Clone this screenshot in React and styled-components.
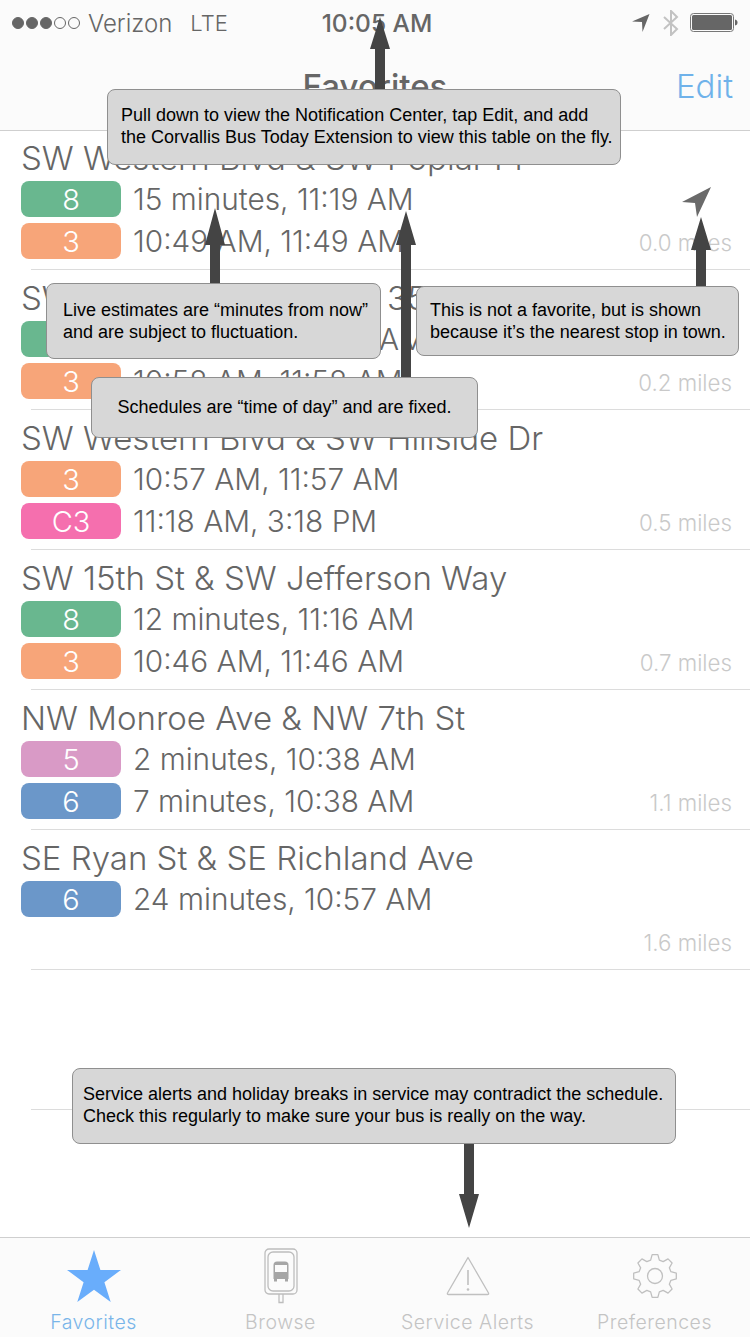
import React from 'react'
import styled, { createGlobalStyle } from 'styled-components'

const stops = [
  {
    name: 'SW Western Blvd & SW Poplar Pl',
    miles: '0.0 miles',
    nearest: true,
    routes: [
      { id: '8', color: '#69b78f', times: '15 minutes, 11:19 AM' },
      { id: '3', color: '#f7a579', times: '10:49 AM, 11:49 AM' }
    ]
  },
  {
    name: 'SW Western Blvd & SW 35th St',
    miles: '0.2 miles',
    routes: [
      { id: '8', color: '#69b78f', times: '23 minutes, 11:27 AM' },
      { id: '3', color: '#f7a579', times: '10:58 AM, 11:58 AM' }
    ]
  },
  {
    name: 'SW Western Blvd & SW Hillside Dr',
    miles: '0.5 miles',
    routes: [
      { id: '3', color: '#f7a579', times: '10:57 AM, 11:57 AM' },
      { id: 'C3', color: '#f56fae', times: '11:18 AM, 3:18 PM' }
    ]
  },
  {
    name: 'SW 15th St & SW Jefferson Way',
    miles: '0.7 miles',
    routes: [
      { id: '8', color: '#69b78f', times: '12 minutes, 11:16 AM' },
      { id: '3', color: '#f7a579', times: '10:46 AM, 11:46 AM' }
    ]
  },
  {
    name: 'NW Monroe Ave & NW 7th St',
    miles: '1.1 miles',
    routes: [
      { id: '5', color: '#d99ac6', times: '2 minutes, 10:38 AM' },
      { id: '6', color: '#6b97c9', times: '7 minutes, 10:38 AM' }
    ]
  },
  {
    name: 'SE Ryan St & SE Richland Ave',
    miles: '1.6 miles',
    routes: [{ id: '6', color: '#6b97c9', times: '24 minutes, 10:57 AM' }]
  }
]

const gearPath = () => {
  const teeth = 8
  const pts = []
  for (let i = 0; i < teeth; i++) {
    const a = (i / teeth) * Math.PI * 2 - Math.PI / 2
    const step = (Math.PI * 2) / teeth
    const add = (r, o) => pts.push(`${(22 + r * Math.cos(a + o * step)).toFixed(2)} ${(22 + r * Math.sin(a + o * step)).toFixed(2)}`)
    add(16.5, -0.34)
    add(21.5, -0.17)
    add(21.5, 0.17)
    add(16.5, 0.34)
  }
  return 'M' + pts.join('L') + 'Z'
}

const GlobalStyle = createGlobalStyle`
  html, body {
    margin: 0;
    padding: 0;
    background: #fff;
  }
  body {
    font-family: Inter, "Liberation Sans", sans-serif;
  }
`

const Screen = styled.div`
  position: relative;
  width: 750px;
  height: 1337px;
  display: flex;
  flex-direction: column;
  overflow: hidden;
  background: #fff;
`

const Header = styled.header`
  height: 131px;
  box-sizing: border-box;
  flex-shrink: 0;
  background: #fbfbfb;
  border-bottom: 1px solid #cfcfcf;
`

const StatusBar = styled.div`
  height: 46px;
  display: flex;
  align-items: center;
  justify-content: space-between;
  padding: 0 12px;
  color: #666;
  font-size: 24px;
  font-weight: 300;
`

const Carrier = styled.div`
  width: 234px;
  display: flex;
  align-items: center;
  gap: 8px;
`

const Dots = styled.span`
  display: flex;
  gap: 2px;
`

const Dot = styled.i`
  width: 12px;
  height: 12px;
  box-sizing: border-box;
  border-radius: 50%;
  border: 1px solid #666;
  background: ${p => (p.$on ? '#666' : 'transparent')};
`

const Network = styled.span`
  margin-left: 10px;
  font-size: 22px;
`

const Clock = styled.div`
  font-weight: 500;
  font-size: 24.5px;
`

const StatusIcons = styled.div`
  width: 230px;
  display: flex;
  align-items: center;
  justify-content: flex-end;
  gap: 11px;
`

const NavBar = styled.div`
  height: 84px;
  display: flex;
  align-items: center;
  justify-content: center;
  position: relative;
  padding-bottom: 4px;
  box-sizing: border-box;
`

const NavTitle = styled.h1`
  margin: 0;
  font-size: 33px;
  font-weight: 500;
  color: #666;
`

const EditButton = styled.button`
  position: absolute;
  right: 17px;
  top: 20px;
  padding: 0;
  border: 0;
  background: none;
  font: inherit;
  font-size: 33px;
  font-weight: 300;
  color: #6fb2ea;
`

const List = styled.main`
  flex: 1;
  min-height: 0;
`

const Row = styled.section`
  position: relative;
  display: flex;
  height: 140px;
  box-sizing: border-box;
  padding: 9px 18px 0 21px;
  &:first-child {
    height: 139px;
    padding-top: 8px;
  }
  &::after {
    content: '';
    position: absolute;
    left: 31px;
    right: 0;
    bottom: 0;
    height: 1px;
    background: #dcdcdc;
  }
`

const StopInfo = styled.div`
  flex: 1;
`

const StopName = styled.h2`
  margin: 0;
  height: 42px;
  line-height: 38px;
  font-size: 33px;
  font-weight: 300;
  color: #666;
  white-space: nowrap;
`

const RouteLine = styled.div`
  display: flex;
  align-items: center;
  height: 36px;
  margin-bottom: 6px;
`

const Badge = styled.span`
  width: 100px;
  height: 36px;
  flex-shrink: 0;
  display: flex;
  align-items: center;
  justify-content: center;
  border-radius: 8px;
  color: #fff;
  font-size: 29px;
  font-weight: 300;
  background: ${p => p.$color};
`

const Times = styled.span`
  margin-left: 12px;
  font-size: 29.8px;
  font-weight: 300;
  color: #666;
  white-space: nowrap;
`

const Side = styled.div`
  display: flex;
  flex-direction: column;
  align-items: flex-end;
  justify-content: flex-end;
  padding-bottom: 14px;
`

const Miles = styled.span`
  font-size: 22.3px;
  font-weight: 300;
  color: #c9c9c9;
  white-space: nowrap;
`

const NearestIcon = styled.svg`
  position: absolute;
  left: 682px;
  top: 56px;
`

const TabBar = styled.nav`
  height: 100px;
  flex-shrink: 0;
  box-sizing: border-box;
  display: grid;
  grid-template-columns: repeat(4, 1fr);
  padding-right: 2px;
  background: #fbfbfb;
  border-top: 1px solid #cfcfcf;
`

const Tab = styled.div`
  display: flex;
  flex-direction: column;
  align-items: center;
  padding-top: 10px;
  color: ${p => (p.$active ? '#79b5e9' : '#c4c4c4')};
  font-size: 19.5px;
  line-height: 24px;
  font-weight: 300;
  letter-spacing: 0.5px;
`

const TabIcon = styled.div`
  height: 56px;
  margin-bottom: 6px;
  display: flex;
  align-items: center;
  justify-content: center;
`

const Tooltip = styled.div`
  position: absolute;
  z-index: 2;
  left: ${p => p.$left}px;
  top: ${p => p.$top}px;
  width: ${p => p.$width}px;
  height: ${p => p.$height}px;
  box-sizing: border-box;
  display: flex;
  align-items: center;
  justify-content: ${p => (p.$center ? 'center' : 'flex-start')};
  padding-left: ${p => (p.$center ? 0 : p.$inset)}px;
  padding-bottom: ${p => p.$lift ?? 2}px;
  background: #d7d7d7;
  border: 1px solid #8f8f8f;
  border-radius: 8px;
  color: #000;
  font-family: "Liberation Sans", Arial, sans-serif;
  font-size: 18px;
  line-height: 22px;
  white-space: pre;
`

const ArrowSvg = styled.svg`
  position: absolute;
  z-index: 1;
  left: ${p => p.$x - 10}px;
  top: ${p => p.$top}px;
`

const UpArrow = ({ x, tip, end, base }) => {
  const h = end - tip
  const b = base - tip
  return (
    <ArrowSvg $x={x} $top={tip} width='20' height={h}>
      <polygon points={`10,0 20,${b} 15,${b} 15,${h} 5,${h} 5,${b} 0,${b}`} fill='#444' />
    </ArrowSvg>
  )
}

const DownArrow = ({ x, start, base, tip }) => {
  const h = tip - start
  const b = base - start
  return (
    <ArrowSvg $x={x} $top={start} width='20' height={h}>
      <polygon points={`5,0 15,0 15,${b} 20,${b} 10,${h} 0,${b} 5,${b}`} fill='#444' />
    </ArrowSvg>
  )
}

const LocationGlyph = styled.svg`
  margin-right: 2px;
`

const StatusLocation = () => (
  <LocationGlyph width='18' height='18' viewBox='0 0 18 18'>
    <path d='M17.5 0 L0 7.5 L10 8 L10.5 18 Z' fill='#666' />
  </LocationGlyph>
)

const Bluetooth = () => (
  <svg width='16' height='26' viewBox='0 0 16 26' fill='none' stroke='#c2c2c2' strokeWidth='2'>
    <path d='M1 7 L14 19 L8 25 L8 1 L14 7 L1 19' />
  </svg>
)

const Battery = () => (
  <svg width='48' height='20' viewBox='0 0 48 20'>
    <rect x='0.5' y='0.5' width='43' height='18' rx='3' fill='none' stroke='#777' />
    <rect x='2' y='2' width='40' height='15' rx='1.5' fill='#666' />
    <path d='M45 6.5 C47 7 47.5 8 47.5 9.5 C47.5 11 47 12 45 12.5 Z' fill='#666' />
  </svg>
)

const StarIcon = () => (
  <svg width='54' height='52' viewBox='0 0 54 52'>
    <path d='M27 0 L33.4 19.9 L54 19.9 L37.4 32.2 L43.7 52 L27 39.8 L10.3 52 L16.6 32.2 L0 19.9 L20.6 19.9 Z' fill='#69adfb' />
  </svg>
)

const BrowseIcon = () => (
  <svg width='34' height='56' viewBox='0 0 34 56' fill='none' stroke='#bdbdbd' strokeWidth='1.3'>
    <rect x='1' y='1' width='32' height='45' rx='4' />
    <rect x='4' y='4' width='26' height='39' rx='5' />
    <path d='M15 46 V54.5 H19 V46' />
    <path d='M9.5 17 Q9.5 13.5 13 13.5 H21 Q24.5 13.5 24.5 17 V31 H9.5 Z' fill='#a6a6a6' stroke='none' />
    <rect x='11' y='17' width='12' height='7' fill='#fbfbfb' stroke='none' />
    <rect x='10' y='31' width='3' height='2.5' fill='#a6a6a6' stroke='none' />
    <rect x='21' y='31' width='3' height='2.5' fill='#a6a6a6' stroke='none' />
  </svg>
)

const AlertIcon = () => (
  <svg width='44' height='40' viewBox='0 0 44 40' fill='none' stroke='#c0c0c0' strokeWidth='1.3'>
    <path d='M22 1.5 L42.5 37 Q43 38.5 41.5 38.5 H2.5 Q1 38.5 1.5 37 Z' strokeLinejoin='round' />
    <path d='M22 14 V29' strokeWidth='1.6' />
    <circle cx='22' cy='33.5' r='1.3' fill='#c0c0c0' stroke='none' />
  </svg>
)

const GearIcon = () => (
  <svg width='44' height='44' viewBox='0 0 44 44' fill='none' stroke='#c0c0c0' strokeWidth='1.3'>
    <path d={gearPath()} strokeLinejoin='round' />
    <circle cx='22' cy='22' r='7.5' />
  </svg>
)

const tabs = [
  { label: 'Favorites', icon: <StarIcon />, active: true },
  { label: 'Browse', icon: <BrowseIcon /> },
  { label: 'Service Alerts', icon: <AlertIcon /> },
  { label: 'Preferences', icon: <GearIcon /> }
]

export default function App() {
  return (
    <Screen>
      <GlobalStyle />
      <Header>
        <StatusBar>
          <Carrier>
            <Dots>
              {[1, 1, 1, 0, 0].map((on, i) => (
                <Dot key={i} $on={on === 1} />
              ))}
            </Dots>
            <span>Verizon</span>
            <Network>LTE</Network>
          </Carrier>
          <Clock>10:05 AM</Clock>
          <StatusIcons>
            <StatusLocation />
            <Bluetooth />
            <Battery />
          </StatusIcons>
        </StatusBar>
        <NavBar>
          <NavTitle>Favorites</NavTitle>
          <EditButton>Edit</EditButton>
        </NavBar>
      </Header>

      <List>
        {stops.map(stop => (
          <Row key={stop.name}>
            <StopInfo>
              <StopName>{stop.name}</StopName>
              {stop.routes.map(route => (
                <RouteLine key={route.id}>
                  <Badge $color={route.color}>{route.id}</Badge>
                  <Times>{route.times}</Times>
                </RouteLine>
              ))}
            </StopInfo>
            {stop.nearest && (
              <NearestIcon width='30' height='30' viewBox='0 0 30 30'>
                <path d='M29 0 L0 15 L13 16 L15 30 Z' fill='#6a6a6a' />
              </NearestIcon>
            )}
            <Side>
              <Miles>{stop.miles}</Miles>
            </Side>
          </Row>
        ))}
        <Row />
      </List>

      <TabBar>
        {tabs.map(tab => (
          <Tab key={tab.label} $active={tab.active}>
            <TabIcon>{tab.icon}</TabIcon>
            <span>{tab.label}</span>
          </Tab>
        ))}
      </TabBar>

      <UpArrow x={380} tip={17} base={49} end={92} />
      <UpArrow x={215} tip={208} base={245} end={285} />
      <UpArrow x={406} tip={211} base={245} end={380} />
      <UpArrow x={701} tip={217} base={250} end={288} />
      <DownArrow x={469} start={1142} base={1194} tip={1228} />

      <Tooltip $left={107} $top={89} $width={514} $height={76} $inset={13}>
        {'Pull down to view the Notification Center, tap Edit, and add\nthe Corvallis Bus Today Extension to view this table on the fly.'}
      </Tooltip>
      <Tooltip $left={46} $top={283} $width={335} $height={76} $inset={16} $lift={0}>
        {'Live estimates are “minutes from now”\nand are subject to fluctuation.'}
      </Tooltip>
      <Tooltip $left={416} $top={286} $width={323} $height={70} $inset={13} $lift={0}>
        {'This is not a favorite, but is shown\nbecause it’s the nearest stop in town.'}
      </Tooltip>
      <Tooltip $left={91} $top={377} $width={387} $height={61} $center>
        Schedules are “time of day” and are fixed.
      </Tooltip>
      <Tooltip $left={72} $top={1068} $width={604} $height={76} $inset={10}>
        {'Service alerts and holiday breaks in service may contradict the schedule.\nCheck this regularly to make sure your bus is really on the way.'}
      </Tooltip>
    </Screen>
  )
}
